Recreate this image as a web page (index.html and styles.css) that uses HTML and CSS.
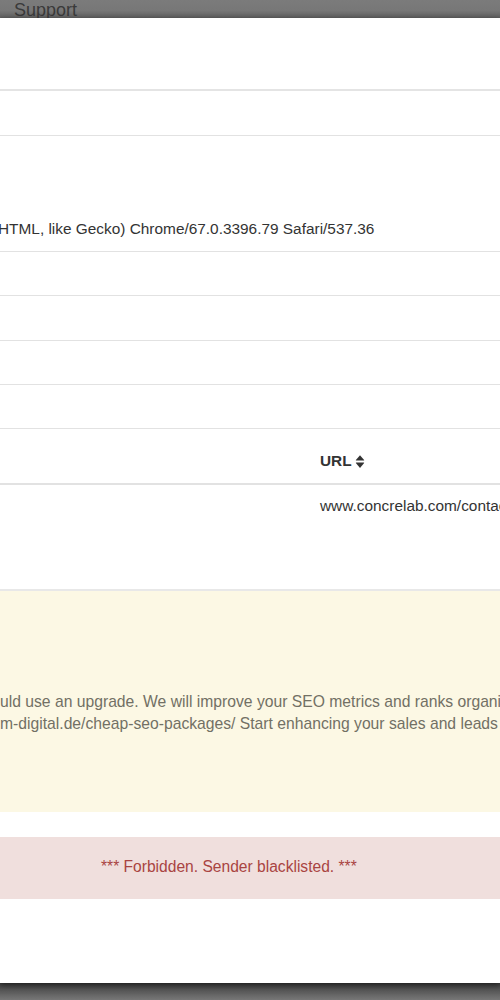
FILE: index.html
```html
<!DOCTYPE html>
<html lang="en">
<head>
<meta charset="utf-8">
<title>Support</title>
<link rel="stylesheet" href="styles.css">
</head>
<body>
  <div class="topbar">Support</div>
  <div class="modal">
    <div class="row row-first"></div>
    <div class="row row-second"></div>
    <div class="row row-ua"><span class="ua">HTML, like Gecko) Chrome/67.0.3396.79 Safari/537.36</span></div>
    <div class="row row-std"></div>
    <div class="row row-tall"></div>
    <div class="row row-std"></div>
    <div class="row row-std"></div>
    <div class="row row-head">
      <span class="th">URL
        <svg class="sort" viewBox="0 0 10 16" width="10" height="15" aria-hidden="true">
          <path d="M5 1.2 L9.4 6.4 Q9.6 7 9 7 H1 Q0.4 7 0.6 6.4 Z" fill="#333"/>
          <path d="M5 14.8 L9.4 9.6 Q9.6 9 9 9 H1 Q0.4 9 0.6 9.6 Z" fill="#333"/>
        </svg>
      </span>
    </div>
    <div class="row row-body"><span class="td">www.concrelab.com/contact</span></div>
    <div class="alert-warning">
      <p class="msg">uld use an upgrade. We will improve your SEO metrics and ranks organically</p>
      <p class="msg">m-digital.de/cheap-seo-packages/ Start enhancing your sales and leads</p>
    </div>
    <div class="alert-danger">*** Forbidden. Sender blacklisted. ***</div>
  </div>
  <div class="bottombar"></div>
</body>
</html>
```
FILE: styles.css
```css
html, body {
  margin: 0;
  padding: 0;
}
body {
  width: 500px;
  height: 1000px;
  overflow: hidden;
  background: #777;
  font-family: "Liberation Sans", Arial, Helvetica, sans-serif;
  font-size: 15.4px;
  color: #333;
}
.topbar {
  height: 18px;
  overflow: hidden;
  padding-left: 14px;
  font-size: 18px;
  line-height: 20px;
  color: #3a3a3a;
  background: linear-gradient(#7b7b7b 0, #777 11px, #5f5f5f 18px);
}
.modal {
  height: 965px;
  background: #fff;
  overflow: hidden;
  box-shadow: 0 2px 6px rgba(0,0,0,0.5);
  position: relative;
  z-index: 1;
}
.row {
  box-sizing: border-box;
  border-bottom: 1px solid #e2e2e2;
  white-space: nowrap;
  line-height: 22px;
}
.row-first {
  height: 73px;
  border-bottom: 2px solid #e4e4e4;
}
.row-second {
  height: 45px;
}
.row-std {
  height: 44px;
}
.row-tall {
  height: 45px;
}
.row-ua {
  height: 116px;
  padding-top: 82px;
}
.ua {
  display: block;
  margin-left: -2px;
}
.row-head {
  height: 56px;
  padding: 21px 0 0 320px;
  border-bottom: 2px solid #e2e2e2;
}
.th {
  font-weight: bold;
  display: inline-flex;
  align-items: center;
  gap: 3px;
}
.sort {
  display: block;
}
.row-body {
  height: 106px;
  padding: 10px 0 0 320px;
  border-bottom: 2px solid #e8e8e8;
}
.alert-warning {
  height: 221px;
  box-sizing: border-box;
  padding-top: 100px;
  background: #fcf8e4;
  color: #727064;
  font-size: 15.7px;
  white-space: nowrap;
  overflow: hidden;
}
.msg {
  margin: 0;
  line-height: 22px;
}
.alert-danger {
  margin-top: 25px;
  height: 62px;
  box-sizing: border-box;
  padding: 19px 0 0 101px;
  line-height: 22px;
  font-size: 15.6px;
  background: #f0dfdd;
  color: #a94442;
  white-space: nowrap;
}
.bottombar {
  height: 17px;
  background: linear-gradient(#3e3e3e, #777);
}
```
